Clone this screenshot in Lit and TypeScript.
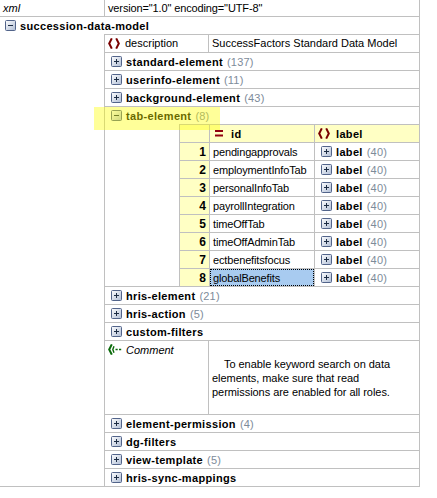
import { LitElement, html, css } from "lit";
import { customElement } from "lit/decorators.js";

const plusIcon = html`<svg class="tog" width="11" height="11" viewBox="0 0 11 11">
  <defs><linearGradient id="g1" x1="0" y1="0" x2="1" y2="1"><stop offset="0" stop-color="#ffffff"/><stop offset="1" stop-color="#aebcd4"/></linearGradient></defs>
  <rect x=".5" y=".5" width="10" height="10" rx="1" fill="url(#g1)" stroke="#52648a"/>
  <path d="M3 5.5h5M5.5 3v5" stroke="#1c2c44" fill="none"/>
</svg>`;
const minusIcon = html`<svg class="tog" width="11" height="11" viewBox="0 0 11 11">
  <defs><linearGradient id="g2" x1="0" y1="0" x2="1" y2="1"><stop offset="0" stop-color="#ffffff"/><stop offset="1" stop-color="#aebcd4"/></linearGradient></defs>
  <rect x=".5" y=".5" width="10" height="10" rx="1" fill="url(#g2)" stroke="#52648a"/>
  <path d="M3 5.5h5" stroke="#1c2c44" fill="none"/>
</svg>`;

const braces = html`<svg class="ico" width="12" height="11" viewBox="0 0 12 11">
  <path d="M3.8 .4L1.2 5.5l2.6 5.1M8.2 .4l2.6 5.1-2.6 5.1" stroke="#7a0000" stroke-width="2" fill="none"/>
</svg>`;
const equals = html`<svg class="ico" width="8" height="7" viewBox="0 0 8 7">
  <path d="M0 1h8M0 5.5h8" stroke="#900010" stroke-width="2" fill="none"/>
</svg>`;
const commentIcon = html`<svg class="ico" width="14" height="11" viewBox="0 0 14 11">
  <path d="M3.8 .4L1.2 5.5l2.6 5.1" stroke="#0a6a0a" stroke-width="2" fill="none"/>
  <path d="M6 2.2L4.8 5.5 6 8.8" stroke="#0a6a0a" stroke-width="1.4" fill="none"/>
  <path d="M7.5 5.5h2.2M11 5.5h2.2" stroke="#0a6a0a" stroke-width="1.6" fill="none"/>
</svg>`;

const ids = ["pendingapprovals","employmentInfoTab","personalInfoTab","payrollIntegration","timeOffTab","timeOffAdminTab","ectbenefitsfocus","globalBenefits"];

@customElement("app-root")
export class AppRoot extends LitElement {
  static styles = css`
    :host { display: block; font: 11px/14px "Liberation Sans", Arial, sans-serif; color: #000; }
    .root { position: relative; width: 419px; border-right: 1px solid #c0c0c0; border-bottom: 1px solid #c0c0c0; }
    .xml { display: flex; height: 16px; border-bottom: 1px solid #c0c0c0; align-items: center; }
    .xml i { width: 101px; padding-left: 3px; }
    .xml span { flex: 1; border-left: 1px solid #c0c0c0; height: 16px; line-height: 16px; padding-left: 3px; letter-spacing: -0.13px; }
    .top { display: flex; align-items: center; height: 17px; padding-left: 5px; gap: 4px; }
    .top span, b, .hd span { font-weight: bold; letter-spacing: 0.33px; }
    .body { margin-left: 104px; border-left: 1px solid #c0c0c0; border-top: 1px solid #c0c0c0; }
    .row { display: flex; align-items: center; height: 17px; border-bottom: 1px solid #c0c0c0; padding-left: 6px; gap: 4px; white-space: nowrap; }
    .row:last-child { border-bottom: 0; }
    .n { color: #7d8b9a; font-weight: normal; letter-spacing: 0.2px; }
    .split { display: flex; height: 17px; border-bottom: 1px solid #c0c0c0; line-height: 17px; }
    .split .k { width: 104px; box-sizing: border-box; display: flex; align-items: center; padding-left: 3px; gap: 5px; border-right: 1px solid #c0c0c0; }
    .split .v { padding-left: 3px; }
    .tab { border-bottom: 1px solid #c0c0c0; }
    .tab .row { border-bottom: 0; }
    .tbl { margin-left: 74px; display: grid; grid-template-columns: 30px 105px 1fr; border-top: 1px solid #c0c0c0; border-left: 1px solid #c0c0c0; }
    .tbl > div { height: 17px; display: flex; align-items: center; border-bottom: 1px solid #c0c0c0; }
    .tbl > div:nth-last-child(-n+3) { border-bottom: 0; }
    .hd { background: #ffffc4; }
    .hd.a, .num { border-right: 1px solid #c0c0c0; }
    .num { background: #ffffc4; font: bold 12px/14px "Liberation Sans", Arial, sans-serif; justify-content: flex-end; padding-right: 3px; }
    .idc { border-right: 1px solid #c0c0c0; padding-left: 3px; letter-spacing: -0.15px; }
    .idh { border-right: 1px solid #c0c0c0; padding-left: 5px; gap: 8px; }
    .lh { padding-left: 3px; gap: 6px; }
    .lc { padding-left: 6px; gap: 4px; }
    .sel { position: relative; background: #a8cbf0; }
    .sel::after { content: ""; position: absolute; inset: 0; border: 1px dotted #000; }
    .comment { display: flex; height: 73px; border-bottom: 1px solid #c0c0c0; }
    .comment .k { width: 104px; box-sizing: border-box; border-right: 1px solid #c0c0c0; display: flex; gap: 4px; padding: 3px 0 0 3px; align-items: flex-start; }
    .comment .k i { line-height: 12px; }
    .comment .v { padding: 16px 0 0 3px; white-space: nowrap; letter-spacing: -0.05px; }
    .comment .v p { margin: 0; text-indent: 12px; }
    .hl { position: absolute; left: 94px; top: 107px; width: 126px; height: 23px; background: rgba(255, 255, 0, 0.4); pointer-events: none; }
    .tog, .ico { display: block; flex: none; }
  `;

  count(name: string, n?: number) {
    return html`<div class="row">${plusIcon}<b>${name}</b>${n !== undefined ? html`<span class="n">(${n})</span>` : ""}</div>`;
  }

  render() {
    return html`<div class="root">
      <div class="xml"><i>xml</i><span>version="1.0" encoding="UTF-8"</span></div>
      <div class="top">${minusIcon}<span>succession-data-model</span></div>
      <div class="body">
        <div class="split"><div class="k">${braces}<span>description</span></div><div class="v">SuccessFactors Standard Data Model</div></div>
        ${this.count("standard-element", 137)}
        ${this.count("userinfo-element", 11)}
        ${this.count("background-element", 43)}
        <div class="tab">
          <div class="row">${minusIcon}<b>tab-element</b><span class="n">(8)</span></div>
          <div class="tbl">
            <div class="hd a"></div>
            <div class="hd idh">${equals}<span>id</span></div>
            <div class="hd lh">${braces}<span>label</span></div>
            ${ids.map((id, i) => html`
              <div class="num">${i + 1}</div>
              <div class="idc ${i === 7 ? "sel" : ""}">${id}</div>
              <div class="lc">${plusIcon}<b>label</b><span class="n">(40)</span></div>
            `)}
          </div>
        </div>
        ${this.count("hris-element", 21)}
        ${this.count("hris-action", 5)}
        ${this.count("custom-filters")}
        <div class="comment">
          <div class="k">${commentIcon}<i>Comment</i></div>
          <div class="v"><p>To enable keyword search on data</p>elements, make sure that read<br>permissions are enabled for all roles.</div>
        </div>
        ${this.count("element-permission", 4)}
        ${this.count("dg-filters")}
        ${this.count("view-template", 5)}
        ${this.count("hris-sync-mappings")}
      </div>
      <div class="hl"></div>
    </div>`;
  }
}
